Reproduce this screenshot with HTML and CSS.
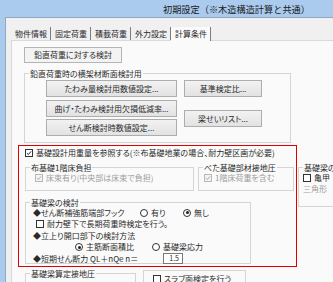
FILE: index.html
```html
<!DOCTYPE html>
<html lang="ja">
<head>
    <meta charset="UTF-8">
    <title>初期設定</title>
    <link rel="stylesheet" href="styles.css">
</head>
<body>

<div class="titlebar">初期設定（※木造構造計算と共通）</div>

<div class="dialog">
    <div class="tabs">
        <span class="tab">物件情報</span>
        <span class="tab">固定荷重</span>
        <span class="tab">積載荷重</span>
        <span class="tab">外力設定</span>
        <span class="tab active">計算条件</span>
    </div>

    <div class="panel">
        <div class="section-label">鉛直荷重に対する検討</div>

        <div class="group group-beam">
            <div class="group-title">鉛直荷重時の横架材断面検討用</div>
            <div class="beam-body">
                <div class="btn-col">
                    <div class="btn btn-wide">たわみ量検討用数値設定...</div>
                    <div class="btn btn-wide">曲げ・たわみ検討用欠損低減率...</div>
                    <div class="btn btn-wide">せん断検討時数値設定...</div>
                </div>
                <div class="btn-col btn-col-right">
                    <div class="btn btn-short">基準検定比...</div>
                    <div class="btn btn-short">梁せいリスト...</div>
                </div>
            </div>
        </div>

        <div class="found-row">
            <!-- red frame around the foundation settings -->
            <div class="highlight">
                <div class="row">
                    <span class="chk"><svg viewBox="0 0 8 8"><path d="M1.2 4.2 L3.2 6 L6.8 1.8"/></svg></span>
                    <span>基礎設計用重量を参照する(※布基礎地業の場合、耐力壁区画が必要)</span>
                </div>

                <div class="split">
                    <div class="group group-floor">
                        <div class="group-title">布基礎1階床負担</div>
                        <div class="row row-indent disabled">
                            <span class="chk"><svg viewBox="0 0 8 8"><path d="M1.2 4.2 L3.2 6 L6.8 1.8"/></svg></span>
                            <span>床束有り(中央部は床束で負担)</span>
                        </div>
                    </div>
                    <div class="group group-slab">
                        <div class="group-title">べた基礎部材接地圧</div>
                        <div class="row row-slab disabled">
                            <span class="chk"><svg viewBox="0 0 8 8"><path d="M1.2 4.2 L3.2 6 L6.8 1.8"/></svg></span>
                            <span>1階床荷重を含む</span>
                        </div>
                    </div>
                </div>

                <div class="group group-check">
                    <div class="group-title">基礎梁の検討</div>
                    <div class="check-body">
                        <div class="row">
                            <span class="label-hook">◆せん断補強筋端部フック</span>
                            <span class="opt opt-yes"><span class="radio"></span>有り</span>
                            <span class="opt"><span class="radio on"></span>無し</span>
                        </div>
                        <div class="row row-sub">
                            <span class="chk"></span>
                            <span>耐力壁下で長期荷重時検定を行う。</span>
                        </div>
                        <div class="row">◆立上り開口部下の検討方法</div>
                        <div class="row row-radios">
                            <span class="opt opt-main"><span class="radio on"></span>主筋断面積比</span>
                            <span class="opt"><span class="radio"></span>基礎梁応力</span>
                        </div>
                        <div class="row">
                            <span class="label-shear">◆短期せん断力 QL＋nQe n＝</span>
                            <span class="num">1.5</span>
                        </div>
                    </div>
                </div>
            </div>

            <div class="group group-side">
                <div class="group-title">基礎梁の</div>
                <div class="row row-side">
                    <span class="chk"></span>
                    <span>亀甲</span>
                </div>
                <div class="row row-side disabled">三角形</div>
            </div>
        </div>

        <div class="bottom-row">
            <div class="group group-ground">
                <div class="group-title">基礎梁算定接地圧</div>
            </div>
            <div class="group group-flat">
                <div class="row row-flat">
                    <span class="chk"></span>
                    <span>スラブ面検定を行う</span>
                </div>
            </div>
        </div>
    </div>
</div>

</body>
</html>
```

FILE: styles.css
```css
* {
    margin: 0;
    padding: 0;
    box-sizing: border-box;
}
body {
    width: 333px;
    height: 282px;
    overflow: hidden;
    background: #aacbee;
    font-family: "Noto Sans CJK JP", sans-serif;
    font-size: 8px;
    font-feature-settings: "palt";
    line-height: 1.2;
    color: #2a2a2a;
}
.titlebar {
    height: 17px;
    padding-left: 163px;
    font-size: 9.2px;
    font-feature-settings: normal;
    line-height: 18px;
    white-space: nowrap;
    overflow: hidden;
    color: #1a1a1a;
}

/* Dialog body under the title bar */
.dialog {
    margin-left: 5px;
    height: 265px;
    overflow: hidden;
    background: #f0f0f0;
    border-left: 1px solid #8fa8c4;
    border-top: 1px solid #8fa8c4;
    padding-top: 9px;
}
.tabs {
    display: flex;
    margin-left: 5px;
    height: 13px;
    position: relative;
    z-index: 1;
}
.tab {
    padding: 0 3px 0 4px;
    border-right: 1px solid #7d7d7d;
    line-height: 13px;
    white-space: nowrap;
}
.tab.active {
    background: #fafafa;
    height: 14px;
}
.panel {
    margin-left: 5px;
    height: 250px;
    overflow: hidden;
    background: #fafafa;
    border: 1px solid #d9d9d9;
    border-right: none;
    padding: 6px 0 0 6px;
}
.section-label {
    margin-left: 6px;
    width: 98px;
    height: 16px;
    border: 1px solid #b4b4b4;
    background: #f3f3f3;
    text-align: center;
    line-height: 14px;
}

/* Group boxes */
.group {
    border: 1px solid #d5d5d5;
    flex: none;
}
.group-title {
    display: table;
    margin: -5px 0 0 4px;
    padding: 0 1px;
    line-height: 9px;
    background: #fafafa;
    white-space: nowrap;
}
.group-beam {
    margin: 10px 0 0 6px;
    width: 267px;
    height: 70px;
}
.beam-body {
    display: flex;
    gap: 7px;
    padding: 2px 0 0 21px;
}
.btn-col {
    display: flex;
    flex-direction: column;
    gap: 2.5px;
}
.btn-col-right {
    gap: 13px;
}
.btn {
    height: 17px;
    border: 1px solid #adadad;
    background: linear-gradient(#f2f2f2, #e2e2e2);
    text-align: center;
    line-height: 15px;
    white-space: nowrap;
    overflow: hidden;
}
.btn-wide {
    width: 131px;
}
.btn-short {
    width: 78px;
}

/* Foundation area */
.found-row {
    display: flex;
    align-items: flex-start;
    margin-top: 2px;
}
.highlight {
    flex: none;
    width: 279px;
    height: 122px;
    border: 1px solid #e00000;
    padding: 1px 0 0 6px;
}
.row {
    display: flex;
    align-items: center;
    height: 11px;
    white-space: nowrap;
}
.chk {
    flex: none;
    width: 8px;
    height: 8px;
    margin-right: 3px;
    border: 1px solid #333;
    background: #fff;
}
.chk svg {
    display: block;
    width: 6px;
    height: 6px;
    fill: none;
    stroke: #222;
    stroke-width: 1.3;
}
.disabled {
    color: #9d9d9d;
}
.disabled .chk {
    border-color: #b8b8b8;
    background: #f4f4f4;
}
.disabled .chk svg {
    stroke: #a8a8a8;
}
.radio {
    flex: none;
    display: inline-flex;
    align-items: center;
    justify-content: center;
    width: 8px;
    height: 8px;
    margin-right: 3px;
    border: 1px solid #333;
    border-radius: 50%;
    background: #fff;
}
.radio.on::after {
    content: "";
    width: 3px;
    height: 3px;
    border-radius: 50%;
    background: #1e1e1e;
}
.opt {
    display: flex;
    align-items: center;
}
.split {
    display: flex;
    gap: 4px;
    margin-top: 9px;
}
.group-floor {
    width: 169px;
    height: 24px;
}
.group-slab {
    width: 96px;
    height: 24px;
}
.row-indent {
    padding-left: 9px;
}
.row-slab {
    padding-left: 5px;
}
.group-check {
    margin-top: 11px;
    width: 226px;
    height: 62px;
}
.check-body {
    padding-left: 7px;
}
.check-body .row {
    height: 11.5px;
}
.label-hook {
    width: 107px;
}
.opt-yes {
    width: 43px;
}
.row-sub {
    padding-left: 3px;
}
.row-radios {
    padding-left: 42px;
}
.opt-main {
    width: 77px;
}
.label-shear {
    width: 130px;
}
.num {
    width: 20px;
    height: 11px;
    border: 1px solid #7a7a7a;
    background: #fff;
    text-align: right;
    padding-right: 3px;
    font-size: 7px;
    line-height: 9px;
}
.group-side {
    margin: 22px 0 0 1px;
    width: 40px;
    height: 40px;
    border-right: none;
}
.row-side {
    padding-left: 4px;
}
.bottom-row {
    display: flex;
    align-items: flex-start;
}
.group-ground {
    margin: 6px 0 0 7px;
    width: 111px;
    height: 30px;
}
.group-flat {
    margin: 3px 0 0 7px;
    width: 103px;
    height: 30px;
    padding: 2px 0 0 9px;
}
```
